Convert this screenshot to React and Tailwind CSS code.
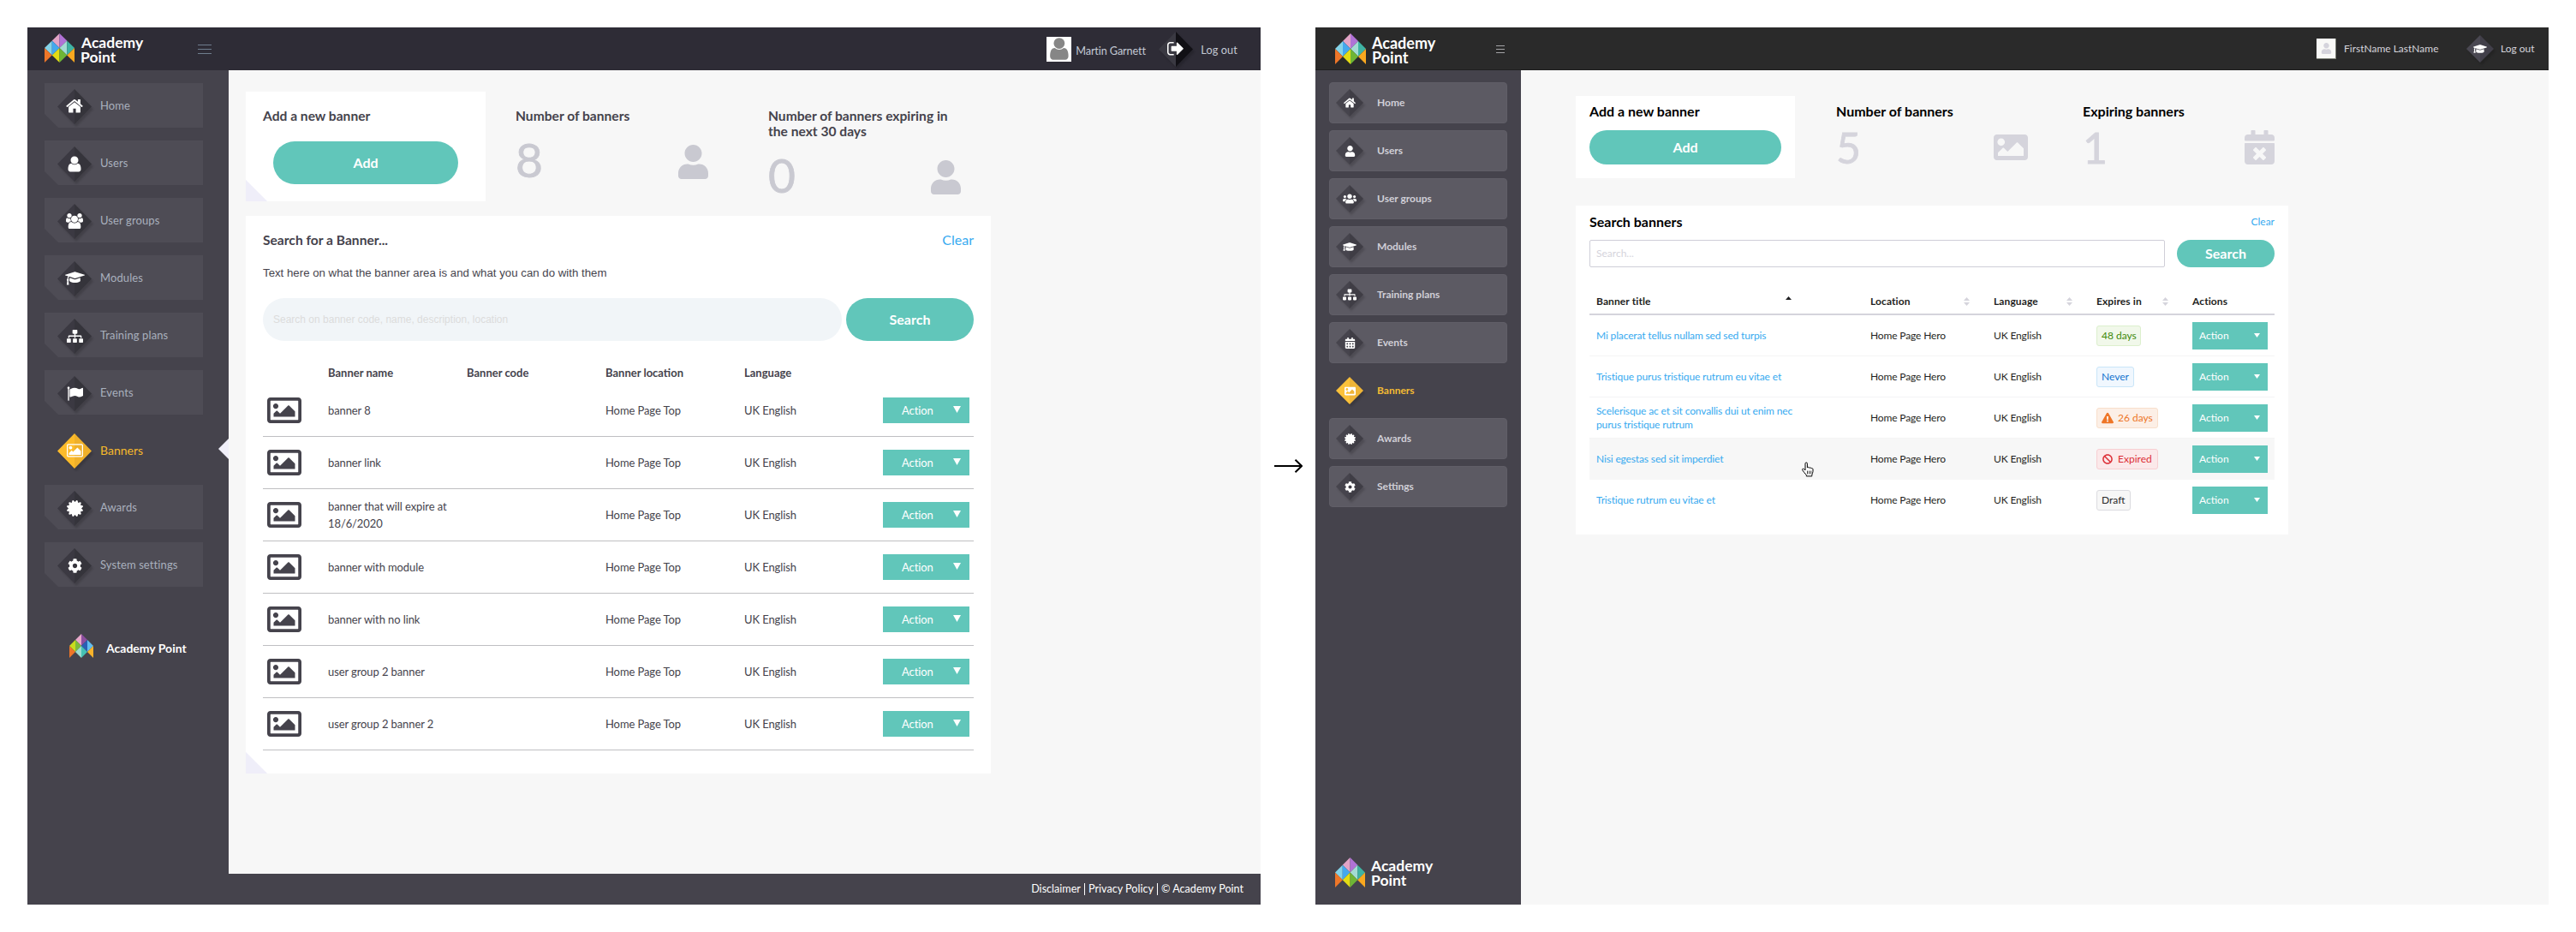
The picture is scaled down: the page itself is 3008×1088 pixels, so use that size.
import {
    FaHome, FaUser, FaUsers, FaGraduationCap, FaSitemap, FaCalendarAlt, FaImage, FaRegImage,
    FaCertificate, FaCog, FaCalendarTimes, FaExclamationTriangle, FaBan,
} from "react-icons/fa";

// Older icon set used by the current design
const oldIcons = {
    home: ["0 0 1664 1792", "M1408 992v480q0 26-19 45t-45 19h-384v-384h-256v384h-384q-26 0-45-19t-19-45v-480q0-1 .5-3t.5-3l575-474 575 474q1 2 1 6zm223-69l-62 74q-8 9-21 11h-3q-13 0-21-7l-692-577-692 577q-12 8-24 7-13-2-21-11l-62-74q-8-10-7-23.500t11-21.500l719-599q32-26 76-26t76 26l244 204v-195q0-14 9-23t23-9h192q14 0 23 9t9 23v408l219 182q10 8 11 21.500t-7 23.500z"],
    user: ["128 0 1536 1792", "M1536 1399q0 109-62.500 187t-150.500 78h-854q-88 0-150.500-78t-62.500-187q0-85 8.500-160.500t31.500-152 58.500-131 94-89 134.500-34.500q131 128 313 128t313-128q76 0 134.500 34.500t94 89 58.500 131 31.500 152 8.500 160.500zm-256-887q0 159-112.500 271.500t-271.500 112.500-271.500-112.500-112.500-271.500 112.500-271.500 271.500-112.500 271.500 112.500 112.500 271.500z"],
    users: ["0 0 1920 1792", "M593 896q-162 5-265 128h-134q-82 0-138-40.500t-56-118.500q0-353 124-353 6 0 43.500 21t97.500 42.500 119 21.500q67 0 133-23-5 37-5 66 0 139 81 256zm1071 637q0 120-73 189.500t-194 69.500h-874q-121 0-194-69.500t-73-189.500q0-53 3.500-103.500t14-109 26.500-108.500 43-97.500 62-81 85.500-53.500 111.500-20q10 0 43 21.500t73 48 107 48 135 21.500 135-21.500 107-48 73-48 43-21.500q61 0 111.500 20t85.500 53.500 62 81 43 97.500 26.500 108.500 14 109 3.500 103.500zm-1024-1277q0 106-75 181t-181 75-181-75-75-181 75-181 181-75 181 75 75 181zm704 384q0 159-112.500 271.500t-271.500 112.500-271.500-112.500-112.500-271.500 112.500-271.500 271.500-112.500 271.500 112.500 112.500 271.500zm576 225q0 78-56 118.500t-138 40.500h-134q-103-123-265-128 81-117 81-256 0-29-5-66 66 23 133 23 59 0 119-21.500t97.500-42.500 43.500-21q124 0 124 353zm-128-609q0 106-75 181t-181 75-181-75-75-181 75-181 181-75 181 75 75 181z"],
    cap: ["0 0 2304 1792", "M1774 836l18 316q4 69-82 128t-235 93.500-323 34.500-323-34.500-235-93.500-82-128l18-316 574 181q22 7 48 7t48-7zm530-324q0 23-22 31l-1120 352q-4 1-10 1t-10-1l-652-206q-43 34-71 111.500t-34 178.500q63 36 63 109 0 69-58 107l58 433q2 14-8 25-9 11-24 11h-192q-15 0-24-11-10-11-8-25l58-433q-58-38-58-107 0-73 65-111 11-207 98-330l-333-104q-22-8-22-31t22-31l1120-352q4-1 10-1t10 1l1120 352q22 8 22 31z"],
    flag: ["0 0 1792 1792", "M320 256q0 72-64 110v1266q0 13-9.500 22.500t-22.500 9.500h-64q-13 0-22.500-9.500t-9.500-22.500v-1266q-64-38-64-110 0-53 37.500-90.500t90.500-37.500 90.500 37.500 37.500 90.500zm1472 64v763q0 25-12.500 38.500t-39.500 27.500q-215 116-369 116-61 0-123.500-22t-108.500-48-115.500-48-142.500-22q-192 0-464 146-17 9-33 9-26 0-45-19t-19-45v-742q0-32 31-55 21-14 79-43 236-120 421-120 107 0 200 29t219 88q38 19 88 19 54 0 117.500-21t110-47 88-47 54.500-21q26 0 45 19t19 45z"],
    picture: ["0 0 1920 1792", "M640 576q0 80-56 136t-136 56-136-56-56-136 56-136 136-56 136 56 56 136zm1024 384v448h-1408v-192l320-320 160 160 512-512zm96-704h-1600q-13 0-22.500 9.500t-9.500 22.500v1216q0 13 9.500 22.500t22.500 9.500h1600q13 0 22.500-9.500t9.500-22.500v-1216q0-13-9.500-22.500t-22.500-9.500zm160 32v1216q0 66-47 113t-113 47h-1600q-66 0-113-47t-47-113v-1216q0-66 47-113t113-47h1600q66 0 113 47t47 113z"],
    signOut: ["0 0 1664 1792", "M640 1440q0 4 1 20t.500 26.500-3 23.500-10 19.500-20.500 6.500h-320q-119 0-203.500-84.500t-84.500-203.500v-704q0-119 84.500-203.500t203.500-84.500h320q13 0 22.500 9.500t9.500 22.500q0 4 1 20t.500 26.500-3 23.500-10 19.500-20.500 6.500h-320q-66 0-113 47t-47 113v704q0 66 47 113t113 47h312l11.500 1 11.500 3 8 5.500 7 9 2 13.500zm928-544q0 26-19 45l-544 544q-19 19-45 19t-45-19-19-45v-288h-448q-26 0-45-19t-19-45v-384q0-26 19-45t45-19h448v-288q0-26 19-45t45-19 45 19l544 544q19 19 19 45z"],
};

function OldIcon({ name, className }) {
    const [viewBox, d] = oldIcons[name];
    return <svg viewBox={viewBox} className={className} fill="currentColor"><path d={d} /></svg>;
}

const brandColors = ["#e2a4c6", "#b072d6", "#85d3e8", "#44a8ee", "#a3dbd3", "#3fb3a3", "#e3dc14", "#6eb535", "#ee7628", "#f9a81f"];
const oldBrandColors = ["#e9a9cb", "#8c4f9f", "#c9dc1e", "#7dbb3c", "#2b5fb4", "#62bdee", "#9ddcd0", "#45c2b4", "#ee7628", "#f9b32b"];

function LogoMark({ className, colors = brandColors }) {
    return (
        <svg viewBox="0 0 36 36" className={className} preserveAspectRatio="none">
            <path fill={colors[0]} d="M18 0v18L9 9z" />
            <path fill={colors[1]} d="M18 0v18l9-9z" />
            <path fill={colors[2]} d="M9 9v18l-9-9z" />
            <path fill={colors[3]} d="M9 9v18l9-9z" />
            <path fill={colors[4]} d="M27 9v18l-9-9z" />
            <path fill={colors[5]} d="M27 9v18l9-9z" />
            <path fill={colors[6]} d="M18 18v18l-9-9z" />
            <path fill={colors[7]} d="M18 18v18l9-9z" />
            <path fill={colors[8]} d="M0 18v18l9-9z" />
            <path fill={colors[9]} d="M36 18v18l-9-9z" />
        </svg>
    );
}

function Diamond({ className, left, right, children }) {
    return (
        <span className={`grid shrink-0 place-items-center ${className}`}>
            <svg viewBox="0 0 40 40" preserveAspectRatio="none" className="[grid-area:1/1] w-full h-full overflow-visible drop-shadow-[2px_3px_1px_rgba(0,0,0,0.16)]">
                <path fill={left} d="M20 0v40L0 20z" />
                <path fill={right} d="M20 0v40l20-20z" />
            </svg>
            <span className="[grid-area:1/1] z-10 flex text-white">{children}</span>
        </span>
    );
}

function Caret({ className }) {
    return <svg viewBox="0 0 10 8" preserveAspectRatio="none" className={className} fill="currentColor"><path d="M0 0h10L5 8z" /></svg>;
}

/* ---------- Current design ---------- */

const oldNav = [
    { label: "Home", icon: <OldIcon name="home" className="w-[20px]" /> },
    { label: "Users", icon: <OldIcon name="user" className="w-[18px]" /> },
    { label: "User groups", icon: <OldIcon name="users" className="w-[20px]" /> },
    { label: "Modules", icon: <OldIcon name="cap" className="w-[23px]" /> },
    { label: "Training plans", icon: <FaSitemap size={19} /> },
    { label: "Events", icon: <OldIcon name="flag" className="w-[19px]" /> },
    { label: "Banners", active: true, icon: <OldIcon name="picture" className="w-[19px]" /> },
    { label: "Awards", icon: <FaCertificate size={19} /> },
    { label: "System settings", icon: <FaCog size={17} /> },
];

const oldBanners = ["banner 8", "banner link", "banner that will expire at 18/6/2020", "banner with module", "banner with no link", "user group 2 banner", "user group 2 banner 2"];

function OldHeader() {
    return (
        <header className="flex h-[50px] shrink-0 items-center bg-[#2e2c36] text-[12.7px] text-[#c3c9d4]">
            <LogoMark className="ml-5 h-[34px] w-[35px] self-start mt-[7px]" />
            <div className="ml-[7px] mt-[3px] w-[77px] text-[17.5px] font-bold leading-[16.500px] text-white"><div className="pl-px">Academy</div>Point</div>
            <div className="ml-[60px] flex w-4 flex-col gap-[4px] text-[#6f7d8d]">
                <span className="h-px bg-current" /><span className="h-px bg-current" /><span className="h-px bg-current" />
            </div>
            <div className="ml-auto flex h-[29px] w-[29px] items-center justify-center bg-white text-[#868686]">
                <OldIcon name="user" className="h-[30px]" />
            </div>
            <span className="ml-[5px] mt-[6px] w-[97px] tracking-[-0.01em]">Martin Garnett</span>
            <Diamond className="h-[41px] w-[40px]" left="#3a3942" right="#111015"><OldIcon name="signOut" className="w-[20px]" /></Diamond>
            <span className="ml-[9px] mt-[3px] mr-[27px] tracking-[0.01em]">Log out</span>
        </header>
    );
}

function OldSidebar() {
    return (
        <aside className="flex w-[235px] shrink-0 flex-col bg-[#45434c] pl-5 pt-[15px]">
            <ul className="flex flex-col gap-[15px]">
                {oldNav.map((item) => (
                    <li key={item.label} className="flex">
                        <div className={`flex h-[52px] w-[185px] items-center pl-[15px] pt-[2px] [clip-path:polygon(0_0,100%_0,100%_100%,16px_100%,0_36px)] ${item.active ? "" : "bg-[#4e4c55]"}`}>
                            <Diamond className="h-[41px] w-[40px]" left={item.active ? "#fcbb2a" : "#3b3942"} right={item.active ? "#efb02a" : "#35343b"}>{item.icon}</Diamond>
                            <span className={`ml-[10px] pb-px ${item.active ? "-mt-px text-[14px] text-[#f6b92b]" : "text-[13px] tracking-[0.1px] text-[#a9b0bd]"}`}>{item.label}</span>
                        </div>
                        {item.active && <span className="ml-auto mt-[13px] h-6 w-3 bg-[#f0eff9] [clip-path:polygon(100%_0,100%_100%,0_50%)]" />}
                    </li>
                ))}
            </ul>
            <div className="mt-[55px] flex items-center pl-[29px]">
                <LogoMark className="h-[28px] w-[28px]" colors={oldBrandColors} />
                <span className="ml-[15px] mt-1 text-[14px] font-bold text-white">Academy Point</span>
            </div>
        </aside>
    );
}

function OldStat({ title, value }) {
    return (
        <div className="w-[225px] pt-[19px]">
            <h3 className="whitespace-pre text-[15.6px] font-bold leading-[18px]">{title}</h3>
            <div className="mt-[25px] flex justify-between text-[#c9c9d1]">
                <span className="-mt-[3px] text-[55px] leading-[40px] [-webkit-text-stroke:0.8px]">{value}</span>
                <FaUser className="h-10 w-[35px]" />
            </div>
        </div>
    );
}

function OldDesign() {
    return (
        <section className="flex w-[1440px] flex-col">
            <OldHeader />
            <div className="flex flex-1">
                <OldSidebar />
                <div className="flex flex-1 flex-col bg-[#f7f7f7]">
                    <main className="flex-1 pl-5 pt-[25px] text-[#45434c]">
                        <div className="flex h-32">
                            <div className="mr-[35px] flex w-[280px] flex-col bg-[linear-gradient(45deg,#efeef9_17.500px,#fff_18px)] px-5 pt-[19px]">
                                <h3 className="text-[15.6px] font-bold leading-[18px]">Add a new banner</h3>
                                <button className="ml-3 mt-[21px] h-[50px] w-[216px] rounded-full bg-[#61c6ba] font-bold text-white">Add</button>
                            </div>
                            <OldStat title="Number of banners" value="8" />
                            <div className="w-[70px]" />
                            <OldStat title={"Number of banners expiring in\nthe next 30 days"} value="0" />
                        </div>
                        <div className="mt-[17px] w-[870px] bg-[linear-gradient(45deg,#efeef9_17.500px,#fff_18px)] px-5 pb-[27px] pt-[18px]">
                            <div className="flex justify-between leading-5">
                                <h3 className="text-[15.6px] font-bold">Search for a Banner...</h3>
                                <a className="text-[#37aaf0]">Clear</a>
                            </div>
                            <p className="mt-[19px] font-['Liberation_Sans',sans-serif] text-[13.25px] leading-5">Text here on what the banner area is and what you can do with them</p>
                            <div className="mt-[19px] flex justify-between">
                                <div className="flex h-[50px] w-[676px] items-center rounded-full bg-[#f1f5f8] pl-3 font-['Liberation_Sans',sans-serif] text-[12px] text-[#dcdcdc]">Search on banner code, name, description, location</div>
                                <button className="h-[50px] w-[149px] rounded-full bg-[#61c6ba] font-bold text-white">Search</button>
                            </div>
                            <div className="grid h-[51px] grid-cols-[76px_162px_162px_162px_1fr] pt-[27px] text-[13px] font-bold leading-5">
                                <span /><span>Banner name</span><span>Banner code</span><span>Banner location</span><span>Language</span>
                            </div>
                            {oldBanners.map((name) => (
                                <div key={name} className="grid h-[61px] grid-cols-[76px_162px_162px_162px_162px_1fr] items-center border-b border-[#bfbfc2] text-[13px] leading-5 tracking-[-0.1px]">
                                    <FaRegImage size={40} className="ml-[5px]" />
                                    <span>{name}</span>
                                    <span />
                                    <span>Home Page Top</span>
                                    <span>UK English</span>
                                    <div className="flex h-[30px] w-[101px] items-center justify-between bg-[#61c6ba] pl-[22px] pr-[10px] text-white">Action<Caret className="-mt-[2px] h-2 w-[9px]" /></div>
                                </div>
                            ))}
                        </div>
                    </main>
                </div>
            </div>
        </section>
    );
}

/* ---------- New design ---------- */

const newNav = [
    { label: "Home", icon: <FaHome size={14} /> },
    { label: "Users", icon: <FaUser size={13} /> },
    { label: "User groups", icon: <FaUsers size={16} /> },
    { label: "Modules", icon: <FaGraduationCap size={16} /> },
    { label: "Training plans", icon: <FaSitemap size={16} /> },
    { label: "Events", icon: <FaCalendarAlt size={13} /> },
    { label: "Banners", active: true, icon: <FaImage size={13} /> },
    { label: "Awards", icon: <FaCertificate size={13} /> },
    { label: "Settings", icon: <FaCog size={13} /> },
];

const newBanners = [
    { title: "Mi placerat tellus nullam sed sed turpis", tag: "48 days", tagClass: "w-[52px] border-[#dcefcd] bg-[#f1f8ea] text-[#3f8a0a]" },
    { title: "Tristique purus tristique rutrum eu vitae et", tag: "Never", tagClass: "w-11 border-[#c9e5f8] bg-[#f0f7fe] text-[#1273cf]" },
    { title: "Scelerisque ac et sit convallis dui ut enim nec purus tristique rutrum", tag: "26 days", tagIcon: <FaExclamationTriangle size={14} />, tagClass: "w-[72px] border-[#f8dfcb] bg-[#fcefe6] text-[#ee7628]" },
    { title: "Nisi egestas sed sit imperdiet", tag: "Expired", hover: true, tagIcon: <FaBan size={12} className="mx-px" />, tagClass: "w-[72px] border-[#f7cfd2] bg-[#fbe9ea] text-[#dc2f37]" },
    { title: "Tristique rutrum eu vitae et", tag: "Draft", tagClass: "w-10 border-[#dcdce0] bg-[#f7f7f7] text-[#2a2a2a]" },
];

function NewHeader() {
    return (
        <header className="flex h-[50px] shrink-0 items-center border-b border-[#1f1f1f] bg-[#2a2a2a] text-[12px] text-[#d5d4dc]">
            <LogoMark className="ml-[23px] mt-[7px] h-9 w-9 self-start" />
            <div className="ml-[7px] mt-[5px] w-[78px] text-[18px] font-bold leading-[17.500px] text-white">Academy<br />Point</div>
            <div className="ml-[67px] mt-[2px] flex w-[10px] flex-col gap-[3px] text-[#a3a3a6]">
                <span className="h-px bg-current" /><span className="h-px bg-current" /><span className="h-px bg-current" />
            </div>
            <div className="ml-auto mt-px flex h-6 w-[23px] items-center justify-center border-b border-r border-[#7f8378] bg-[#f9f9f7] text-[#d5d4dc]"><FaUser size={13} /></div>
            <span className="ml-[9px] w-[143px]">FirstName LastName</span>
            <Diamond className="h-8 w-8" left="#4a4852" right="#413f49"><FaGraduationCap size={16} /></Diamond>
            <span className="ml-2 mr-4 w-10 whitespace-nowrap">Log out</span>
        </header>
    );
}

function NewSidebar() {
    return (
        <aside className="flex w-60 shrink-0 flex-col bg-[#45434c] px-4 pt-[14px] pb-5">
            <ul className="flex flex-col gap-2">
                {newNav.map((item) => (
                    <li key={item.label} className={`flex h-12 items-center rounded border pl-[7px] text-[12px] font-bold ${item.active ? "border-transparent text-[#f3bb33]" : "border-[#605e67] bg-[#5c5a63] text-[#d0cfd7]"}`}>
                        <Diamond className="h-8 w-8" left={item.active ? "#fcc23a" : "#46444d"} right={item.active ? "#eeb437" : "#3f3d45"}>{item.icon}</Diamond>
                        <span className="ml-4">{item.label}</span>
                    </li>
                ))}
            </ul>
            <div className="mt-auto flex items-center pl-[7px]">
                <LogoMark className="h-[35px] w-[35px]" />
                <div className="ml-[7px] text-[17.500px] font-bold leading-[17px] text-white">Academy<br />Point</div>
            </div>
        </aside>
    );
}

function NewStat({ title, value, icon }) {
    return (
        <div className="flex w-64 flex-col px-4 pt-[6px]">
            <h3 className="font-bold leading-6 text-black">{title}</h3>
            <div className="mt-[10px] flex h-10 items-center justify-between text-[#d5d4dc]">
                <span className="text-[50px] leading-[40px] [-webkit-text-stroke:0.8px]">{value}</span>
                {icon}
            </div>
        </div>
    );
}

function Sorter() {
    return (
        <svg viewBox="0 0 7 10" className="h-[10px] w-[7px] text-[#d5d4dc]" fill="currentColor">
            <path d="M3.500 0L7 4H0z" /><path d="M3.500 10L0 6h7z" />
        </svg>
    );
}

function NewDesign() {
    return (
        <section className="flex w-[1440px] flex-col text-[#1f1f22]">
            <NewHeader />
            <div className="flex flex-1">
                <NewSidebar />
                <main className="flex-1 bg-[#f7f7f7] pl-16 pt-[30px]">
                    <div className="flex h-24 gap-8">
                        <div className="flex w-64 flex-col bg-white px-4 pt-[6px]">
                            <h3 className="font-bold leading-6 text-black">Add a new banner</h3>
                            <button className="mt-[10px] h-10 rounded-full bg-[#61c6ba] font-bold text-white">Add</button>
                        </div>
                        <NewStat title="Number of banners" value="5" icon={<FaImage size={40} />} />
                        <NewStat title="Expiring banners" value="1" icon={<FaCalendarTimes className="h-10 w-[35px]" />} />
                    </div>
                    <div className="mt-8 h-96 w-[832px] bg-white px-4 pt-[6px]">
                        <div className="flex items-center justify-between leading-6">
                            <h3 className="font-bold text-black">Search banners</h3>
                            <a className="pt-px text-[12px] text-[#37aaf0]">Clear</a>
                        </div>
                        <div className="mt-[9px] flex h-8 justify-between">
                            <div className="flex w-[672px] items-center rounded-xs border border-[#cfced8] pl-[7px] text-[12px] text-[#d5d4dc]">Search...</div>
                            <button className="w-[114px] rounded-full bg-[#61c6ba] font-bold text-white">Search</button>
                        </div>
                        <div className="mt-6 grid h-8 grid-cols-[320px_144px_120px_112px_1fr] items-center border-b-2 border-[#d5d4dc] pl-2 pt-[2px] text-[12px] font-bold tracking-[0.1px]">
                            <span className="flex justify-between pr-[92px]">Banner title<Caret className="mt-[3px] h-[4px] w-[7px] rotate-180" /></span>
                            <span className="flex items-center justify-between pr-7">Location<Sorter /></span>
                            <span className="flex items-center justify-between pr-[28px]">Language<Sorter /></span>
                            <span className="flex items-center justify-between pr-[28px]">Expires in<Sorter /></span>
                            <span>Actions</span>
                        </div>
                        {newBanners.map((b) => (
                            <div key={b.title} className={`relative grid h-12 grid-cols-[320px_144px_120px_112px_1fr] items-center border-b pl-2 text-[12px] leading-4 tracking-[-0.14px] last:border-transparent ${b.hover ? "border-[#f7f7f7] bg-[#f7f7f7]" : "border-[#f4f4f5]"}`}>
                                <a className="w-[236px] text-[#37aaf0]">{b.title}</a>
                                <span>Home Page Hero</span>
                                <span>UK English</span>
                                <span className={`flex h-6 items-center gap-[5px] rounded-[3px] border pl-[5px] tracking-normal ${b.tagClass}`}>{b.tagIcon}{b.tag}</span>
                                <div className="flex h-8 w-[88px] items-center justify-between bg-[#61c6ba] pl-2 pr-[9px] tracking-normal text-white">Action<Caret className="h-[5px] w-[7px]" /></div>
                                {b.hover && (
                                    <svg viewBox="0 0 17 18" className="absolute left-[247px] top-[27px] w-[17px]" fill="#fff" stroke="#000" strokeLinejoin="round" strokeLinecap="round">
                                        <path d="M5 9.500V2.200a1.200 1.200 0 0 1 2.400 0V7c.4-.9 2-.8 2.300.3.6-.8 2-.5 2.200.5.8-.5 2-.1 2.100 1 .2 1.800 0 3.200-.5 4.700l-.7 1.900v1.500H6.300v-1.400C4.600 13.800 3 11.700 1.800 9.900c-.9-1.400.7-2.300 1.800-1.300z" />
                                        <path d="M7.500 11v3M9.600 11v3M11.700 11v3" strokeWidth=".8" />
                                    </svg>
                                )}
                            </div>
                        ))}
                    </div>
                </main>
            </div>
        </section>
    );
}

export default function App() {
    return (
        <div className="flex h-[1088px] w-[3008px] bg-white p-8 font-['Lato','Noto_Sans',sans-serif] text-[16px]">
            <div className="flex w-[1440px] flex-col">
                <div className="flex flex-1">
                    <OldDesign />
                </div>
                {/* Page footer */}
                <footer className="flex h-9 shrink-0 items-center justify-end bg-[#45434c] pr-5 text-[12.600px] leading-[14px] text-white">
                    <span className="border-r border-white pr-1">Disclaimer</span>
                    <span className="border-r border-white px-1">Privacy Policy</span>
                    <span className="pl-1">© Academy Point</span>
                </footer>
            </div>
            <div className="flex w-16 items-center justify-center">
                <svg viewBox="0 0 33 16" className="w-[33px]" fill="none" stroke="#000" strokeWidth="2"><path d="M0 8h32M24.500 .7L32 8l-7.500 7.300" /></svg>
            </div>
            <NewDesign />
        </div>
    );
}
